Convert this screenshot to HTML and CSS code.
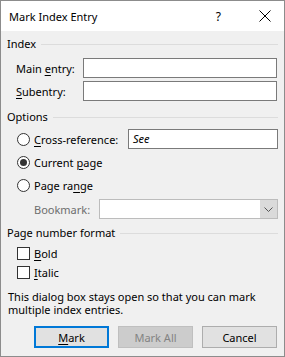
FILE: index.html
```html
<!DOCTYPE html>
<html lang="en">
<head>
  <meta charset="utf-8" />
  <title>Mark Index Entry</title>
  <link rel="stylesheet" href="styles.css">
</head>
<body>
  <div class="dialog">
    <div class="titlebar">
      <span class="title">Mark Index Entry</span>
      <span class="help">?</span>
      <svg class="close" width="12" height="12" viewBox="0 0 12 12">
        <path d="M0.5 0.5 L11.5 11.5 M11.5 0.5 L0.5 11.5" stroke="#000" stroke-width="1" fill="none"/>
      </svg>
    </div>
    <div class="content">
      <div class="group-head"><span>Index</span><div class="rule"></div></div>
      <div class="field-row first">
        <label class="field-label">Main <u>e</u>ntry:</label>
        <div class="textbox"></div>
      </div>
      <div class="field-row">
        <label class="field-label"><u>S</u>ubentry:</label>
        <div class="textbox"></div>
      </div>

      <div class="group-head options"><span>Options</span><div class="rule"></div></div>
      <div class="option-row first">
        <span class="radio"></span>
        <span class="opt-label"><u>C</u>ross-reference:</span>
        <div class="textbox see"><i>See</i></div>
      </div>
      <div class="option-row">
        <span class="radio checked"></span>
        <span class="opt-label">Current <u>p</u>age</span>
      </div>
      <div class="option-row">
        <span class="radio"></span>
        <span class="opt-label">Page ra<u>n</u>ge</span>
      </div>
      <div class="bookmark-row">
        <span class="disabled-label">Bookmark:</span>
        <div class="combo">
          <div class="combo-field"></div>
          <div class="combo-btn">
            <svg width="9" height="5" viewBox="0 0 9 5"><path d="M0.5 0.5 L4.5 4.5 L8.5 0.5" stroke="#555" fill="none"/></svg>
          </div>
        </div>
      </div>

      <div class="group-head format"><span>Page number format</span><div class="rule"></div></div>
      <div class="check-row first">
        <span class="checkbox"></span>
        <span class="opt-label"><u>B</u>old</span>
      </div>
      <div class="check-row">
        <span class="checkbox"></span>
        <span class="opt-label"><u>I</u>talic</span>
      </div>

      <p class="note">This dialog box stays open so that you can mark multiple index entries.</p>

      <div class="buttons">
        <button class="btn default"><u>M</u>ark</button>
        <button class="btn" disabled>Mark All</button>
        <button class="btn">Cancel</button>
      </div>
    </div>
  </div>
</body>
</html>
```

FILE: styles.css
```css
html, body {
  margin: 0;
  padding: 0;
  background: #f0f0f0;
}
body {
  font-family: "Noto Sans", "Open Sans", Arial, sans-serif;
  font-size: 11px;
  color: #000;
}
u {
  text-decoration-thickness: 1px;
  text-underline-offset: 2px;
}
.dialog {
  width: 285px;
  height: 357px;
  box-sizing: border-box;
  border: 1px solid #8c8c8c;
  background: #f0f0f0;
  display: flex;
  flex-direction: column;
}
.titlebar {
  height: 30px;
  background: #fff;
  display: flex;
  align-items: center;
  padding-left: 8px;
  flex-shrink: 0;
}
.title {
  font-size: 11px;
  flex: 1;
}
.help {
  font-size: 12px;
  margin-right: 38px;
}
.close {
  margin-right: 13px;
}
.content {
  padding: 0 6px 0 6px;
  flex: 1;
}
.group-head {
  height: 14px;
  margin-top: 6px;
  display: flex;
  align-items: center;
  line-height: 14px;
}
.group-head .rule {
  flex: 1;
  height: 1px;
  background: #dcdcdc;
  margin-left: 5px;
}
.group-head.options { margin-top: 9px; }
.group-head.format { margin-top: 7px; }

.field-row {
  display: flex;
  align-items: center;
  height: 20px;
  margin-top: 3px;
}
.field-row.first { margin-top: 7px; }
.field-label {
  width: 67px;
  padding-left: 9px;
  flex-shrink: 0;
}
.textbox {
  flex: 1;
  height: 20px;
  box-sizing: border-box;
  border: 1px solid #7a7a7a;
  background: #fff;
  margin-right: 1px;
}
.textbox.see {
  flex: none;
  width: 150px;
  margin-left: auto;
  margin-right: 0;
  padding-left: 4px;
  line-height: 18px;
}

.option-row {
  display: flex;
  align-items: center;
  height: 20px;
  margin-top: 3px;
}
.option-row.first { margin-top: 5px; }
.radio {
  width: 13px;
  height: 13px;
  box-sizing: border-box;
  border: 1px solid #333;
  border-radius: 50%;
  background: #fff;
  margin-left: 10px;
  margin-right: 4px;
  flex-shrink: 0;
  display: flex;
  align-items: center;
  justify-content: center;
}
.radio.checked::after {
  content: "";
  width: 7px;
  height: 7px;
  border-radius: 50%;
  background: #333;
}
.bookmark-row {
  display: flex;
  align-items: center;
  height: 20px;
  margin-top: 4px;
}
.disabled-label {
  color: #6d6d6d;
  padding-left: 27px;
  width: 64px;
  flex-shrink: 0;
}
.combo {
  flex: 1;
  height: 20px;
  box-sizing: border-box;
  border: 1px solid #bcbcbc;
  display: flex;
  background: #fff;
  margin-left: 1px;
}
.combo-field {
  flex: 1;
}
.combo-btn {
  width: 17px;
  background: #dadada;
  display: flex;
  align-items: center;
  justify-content: center;
}

.check-row {
  display: flex;
  align-items: center;
  height: 19px;
}
.check-row.first { margin-top: 4px; }
.checkbox {
  width: 13px;
  height: 13px;
  box-sizing: border-box;
  border: 1px solid #333;
  background: #fff;
  margin-left: 10px;
  margin-right: 4px;
  flex-shrink: 0;
}

.note {
  margin: 8px 0 0 0;
  line-height: 13px;
  padding-left: 1px;
}

.buttons {
  display: flex;
  justify-content: flex-end;
  gap: 9px;
  margin-top: 10px;
  padding-right: 1px;
}
.btn {
  width: 75px;
  height: 22px;
  box-sizing: border-box;
  border: 1px solid #adadad;
  background: #e1e1e1;
  font-family: inherit;
  font-size: 11px;
  color: #000;
  padding: 0;
}
.btn.default {
  border: 2px solid #0078d7;
}
.btn:disabled {
  background: #cccccc;
  border-color: #bfbfbf;
  color: #838383;
}
```
